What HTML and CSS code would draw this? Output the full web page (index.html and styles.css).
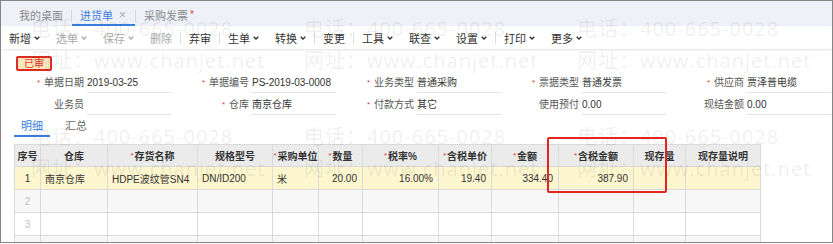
FILE: index.html
```html
<!DOCTYPE html>
<html lang="zh-CN">
<head>
    <meta charset="UTF-8">
    <title>进货单</title>
    <link rel="stylesheet" href="styles.css">
</head>
<body>

<div class="screen">
    <!-- document tabs -->
    <div class="doc-tabs">
        <span class="doc-tab">我的桌面</span>
        <span class="tab-sep"></span>
        <span class="doc-tab active">进货单<span class="close">×</span></span>
        <span class="tab-sep"></span>
        <span class="doc-tab">采购发票<span class="dirty">*</span></span>
    </div>

    <!-- toolbar -->
    <div class="toolbar">
        <span class="tool">新增<svg class="caret" viewBox="0 0 6 4"><path d="M0.7 0.7L3 3L5.3 0.7"/></svg></span>
        <span class="tool disabled">选单<svg class="caret" viewBox="0 0 6 4"><path d="M0.7 0.7L3 3L5.3 0.7"/></svg></span>
        <span class="tool disabled">保存<svg class="caret" viewBox="0 0 6 4"><path d="M0.7 0.7L3 3L5.3 0.7"/></svg></span>
        <span class="tool disabled">删除</span>
        <span class="tool-sep"></span>
        <span class="tool">弃审</span>
        <span class="tool-sep"></span>
        <span class="tool">生单<svg class="caret" viewBox="0 0 6 4"><path d="M0.7 0.7L3 3L5.3 0.7"/></svg></span>
        <span class="tool">转换<svg class="caret" viewBox="0 0 6 4"><path d="M0.7 0.7L3 3L5.3 0.7"/></svg></span>
        <span class="tool-sep"></span>
        <span class="tool">变更</span>
        <span class="tool-sep"></span>
        <span class="tool">工具<svg class="caret" viewBox="0 0 6 4"><path d="M0.7 0.7L3 3L5.3 0.7"/></svg></span>
        <span class="tool">联查<svg class="caret" viewBox="0 0 6 4"><path d="M0.7 0.7L3 3L5.3 0.7"/></svg></span>
        <span class="tool">设置<svg class="caret" viewBox="0 0 6 4"><path d="M0.7 0.7L3 3L5.3 0.7"/></svg></span>
        <span class="tool-sep"></span>
        <span class="tool">打印<svg class="caret" viewBox="0 0 6 4"><path d="M0.7 0.7L3 3L5.3 0.7"/></svg></span>
        <span class="tool">更多<svg class="caret" viewBox="0 0 6 4"><path d="M0.7 0.7L3 3L5.3 0.7"/></svg></span>
    </div>

    <div class="content">
        <div class="status"><span class="badge">已审</span></div>

        <!-- header fields -->
        <div class="form-grid">
            <div class="field"><label class="req">单据日期</label><span class="value">2019-03-25</span></div>
            <div class="field"><label class="req">单据编号</label><span class="value">PS-2019-03-0008</span></div>
            <div class="field"><label class="req">业务类型</label><span class="value">普通采购</span></div>
            <div class="field"><label class="req">票据类型</label><span class="value">普通发票</span></div>
            <div class="field"><label class="req">供应商</label><span class="value">贾泽普电缆</span></div>

            <div class="field"><label>业务员</label><span class="value"></span></div>
            <div class="field"><label class="req">仓库</label><span class="value">南京仓库</span></div>
            <div class="field"><label class="req">付款方式</label><span class="value">其它</span></div>
            <div class="field"><label>使用预付</label><span class="value">0.00</span></div>
            <div class="field"><label>现结金额</label><span class="value">0.00</span></div>
        </div>

        <div class="sub-tabs">
            <span class="sub-tab active">明细</span>
            <span class="sub-tab">汇总</span>
        </div>

        <!-- detail grid -->
        <table class="grid">
            <colgroup>
                <col style="width:26px"><col style="width:67px"><col style="width:90px"><col style="width:75px">
                <col style="width:46px"><col style="width:44px"><col style="width:76px"><col style="width:53px">
                <col style="width:67px"><col style="width:75px"><col style="width:52px"><col style="width:75px">
            </colgroup>
            <thead>
                <tr>
                    <th>序号</th>
                    <th>仓库</th>
                    <th><i>*</i>存货名称</th>
                    <th>规格型号</th>
                    <th><i>*</i>采购单位</th>
                    <th><i>*</i>数量</th>
                    <th><i>*</i>税率%</th>
                    <th><i>*</i>含税单价</th>
                    <th><i>*</i>金额</th>
                    <th><i>*</i>含税金额</th>
                    <th>现存量</th>
                    <th>现存量说明</th>
                </tr>
            </thead>
            <tbody>
                <tr class="current">
                    <td class="no">1</td>
                    <td>南京仓库</td>
                    <td>HDPE波纹管SN4</td>
                    <td>DN/ID200</td>
                    <td>米</td>
                    <td class="num">20.00</td>
                    <td class="num">16.00%</td>
                    <td class="num">19.40</td>
                    <td class="num">334.40</td>
                    <td class="num">387.90</td>
                    <td></td>
                    <td></td>
                </tr>
                <tr class="odd">
                    <td class="no">2</td><td></td><td></td><td></td><td></td><td></td>
                    <td></td><td></td><td></td><td></td><td></td><td></td>
                </tr>
                <tr>
                    <td class="no">3</td><td></td><td></td><td></td><td></td><td></td>
                    <td></td><td></td><td></td><td></td><td></td><td></td>
                </tr>
                <tr class="odd">
                    <td class="no">4</td><td></td><td></td><td></td><td></td><td></td>
                    <td></td><td></td><td></td><td></td><td></td><td></td>
                </tr>
            </tbody>
        </table>
    </div>

    <!-- watermark overlay -->
    <div class="watermark wm-top">
        <span>电话：400-665-0028</span><span>电话：400-665-0028</span><span>电话：400-665-0028</span>
        <span>网址：www.chanjet.net</span><span>网址：www.chanjet.net</span><span>网址：www.chanjet.net</span>
    </div>
    <div class="watermark wm-bottom">
        <span>电话：400-665-0028</span><span>电话：400-665-0028</span><span>电话：400-665-0028</span>
        <span>网址：www.chanjet.net</span><span>网址：www.chanjet.net</span><span>网址：www.chanjet.net</span>
    </div>

    <div class="highlight"></div>
</div>

</body>
</html>
```

FILE: styles.css
```css
body {
    margin: 0;
    font-family: "Liberation Sans", "Noto Sans CJK SC", sans-serif;
    color: #333;
    background: #fff;
}

.screen {
    position: relative;
    width: 833px;
    height: 243px;
    box-sizing: border-box;
    border: 1px solid #858585;
    overflow: hidden;
    background: #fff;
}

/* document tabs */
.doc-tabs {
    display: flex;
    align-items: stretch;
    height: 25px;
    padding-left: 10px;
    background: #eef1f8;
}

.doc-tab {
    display: flex;
    align-items: center;
    box-sizing: border-box;
    padding: 4px 8px 0;
    border-bottom: 2px solid transparent;
    font-size: 11px;
    color: #888;
}

.doc-tab.active {
    color: #3b7ddd;
    border-bottom-color: #3b7ddd;
    padding-right: 9px;
}

.doc-tab .close {
    margin-left: 6px;
    font-size: 12px;
    color: #aaa;
}

.doc-tab .dirty {
    color: #e23a3a;
    font-size: 10px;
    margin-left: 2px;
    align-self: flex-start;
    margin-top: 4px;
}

.tab-sep {
    width: 1px;
    height: 12px;
    margin-top: 9px;
    background: #d4d7de;
}

/* toolbar */
.toolbar {
    position: relative;
    display: flex;
    align-items: center;
    height: 23px;
    background: #fff;
    box-shadow: 0 1px 2px rgba(0, 0, 0, 0.12);
    font-size: 11px;
}

.tool {
    display: flex;
    align-items: center;
    padding: 0 8px;
    color: #333;
}

.tool.disabled {
    color: #aaa;
}

.caret {
    width: 6px;
    height: 4px;
    margin-left: 3px;
    fill: none;
    stroke: currentColor;
    stroke-width: 1.4;
}

.tool-sep {
    width: 1px;
    height: 12px;
    background: #dedede;
}

/* content */
.content {
    padding-top: 4px;
}

.status {
    padding-left: 15px;
    height: 16px;
}

.badge {
    display: inline-block;
    box-sizing: border-box;
    width: 36px;
    height: 15px;
    line-height: 11px;
    border: 2px solid #dd2a22;
    border-radius: 2px;
    background: #fde7be;
    color: #e0352b;
    font-size: 10px;
    text-align: center;
}

.form-grid {
    display: grid;
    grid-template-columns: repeat(5, 165px);
    row-gap: 2px;
    margin: 4px 0 0 5px;
}

.field {
    display: grid;
    grid-template-columns: 78px 84px;
    column-gap: 3px;
    height: 20px;
    font-size: 10px;
}

.field label {
    text-align: right;
    line-height: 19px;
    color: #555;
}

.field label.req::before {
    content: "*";
    color: #e4393c;
    font-size: 8px;
    margin-right: 4px;
    vertical-align: 1px;
}

.field .value {
    line-height: 19px;
    border-bottom: 1px solid #e3e3e3;
    color: #333;
    white-space: nowrap;
}

/* detail / summary tabs */
.sub-tabs {
    display: flex;
    gap: 8px;
    margin: 2px 0 0 13px;
}

.sub-tab {
    box-sizing: border-box;
    height: 20px;
    line-height: 18px;
    padding: 0 7px;
    border-bottom: 2px solid transparent;
    font-size: 11px;
    color: #666;
}

.sub-tab.active {
    color: #3b7ddd;
    border-bottom-color: #3b7ddd;
}

/* grid */
.grid {
    margin: 7px 0 0 13px;
    width: 746px;
    border-collapse: collapse;
    table-layout: fixed;
    font-size: 10px;
}

.grid th,
.grid td {
    border: 1px solid #dadada;
    padding: 0 4px;
    white-space: nowrap;
    overflow: hidden;
}

.grid th {
    height: 21px;
    padding: 0;
    background: #ebebeb;
    font-weight: bold;
    color: #333;
    text-align: center;
}

.grid th i {
    font-style: normal;
    font-weight: normal;
    color: #e4393c;
    font-size: 8px;
    margin-right: 1px;
    vertical-align: 2px;
}

.grid td {
    height: 22px;
    color: #333;
}

.grid tr.current td {
    background: #fdf6cf;
}

.grid tr.odd td {
    background: #f7f7f7;
}

.grid td.no {
    text-align: center;
    color: #c2c2c2;
}

.grid tr.current td.no {
    color: #333;
}

.grid td.num {
    text-align: right;
    padding-right: 5px;
}

/* watermark over the page */
.watermark {
    position: absolute;
    left: 30px;
    display: grid;
    grid-template-columns: repeat(3, 273px);
    grid-auto-rows: 32px;
    font-family: "Open Sans", "Noto Sans CJK SC", sans-serif;
    font-size: 20px;
    line-height: 24px;
    letter-spacing: 1px;
    color: rgba(0, 0, 0, 0.08);
    white-space: nowrap;
    pointer-events: none;
}

.wm-top {
    top: 16px;
}

.wm-bottom {
    top: 124px;
}

/* red marker drawn over the grid */
.highlight {
    position: absolute;
    left: 546px;
    top: 136px;
    width: 120px;
    height: 56px;
    box-sizing: border-box;
    border: 2px solid #e3251f;
    border-radius: 2px;
}
```
